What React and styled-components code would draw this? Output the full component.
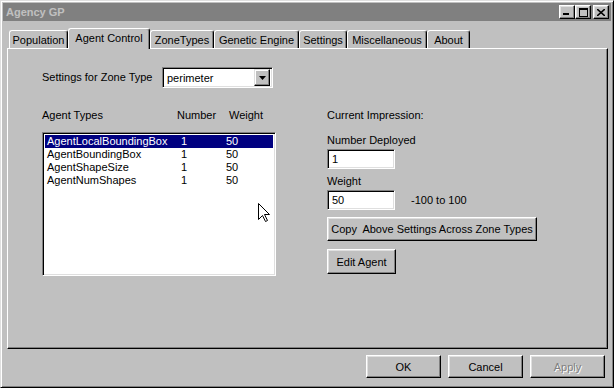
import React from 'react';
import styled, { createGlobalStyle } from 'styled-components';

const GlobalStyle = createGlobalStyle`
  html, body {
    margin: 0;
    padding: 0;
    background: #c0c0c0;
  }
  body {
    font-family: "Liberation Sans", Arial, sans-serif;
    font-size: 11px;
    color: #000;
  }
  * {
    box-sizing: border-box;
  }
`;

const Window = styled.div`
  width: 614px;
  height: 388px;
  display: flex;
  flex-direction: column;
  background: #c0c0c0;
  border: 1px solid;
  border-color: #dfdfdf #000 #000 #dfdfdf;
  box-shadow: inset 1px 1px #fff, inset -1px -1px #808080;
  padding: 2px;
`;

const TitleBar = styled.div`
  height: 18px;
  background: #808080;
  color: #c0c0c0;
  font-weight: bold;
  font-size: 11px;
  display: flex;
  align-items: center;
  justify-content: space-between;
  padding: 0 2px 0 3px;
`;

const TitleButtons = styled.div`
  display: flex;
  gap: 0;
`;

const TitleButton = styled.div`
  width: 16px;
  height: 14px;
  margin-left: ${({ $gap }) => ($gap ? '2px' : '0')};
  background: #c0c0c0;
  border: 1px solid;
  border-color: #fff #000 #000 #fff;
  box-shadow: inset -1px -1px #808080, inset 1px 1px #dfdfdf;
  display: flex;
  align-items: center;
  justify-content: center;
`;

const Body = styled.div`
  flex: 1;
  display: flex;
  flex-direction: column;
  padding: 7px 3px 5px 4px;
`;

const TabStrip = styled.div`
  display: flex;
  align-items: flex-end;
  height: 20px;
  padding-left: 2px;
  position: relative;
  z-index: 1;
`;

const Tab = styled.div`
  width: ${({ $w }) => $w}px;
  height: ${({ $active }) => ($active ? '21px' : '18px')};
  margin-bottom: ${({ $active }) => ($active ? '-1px' : '0')};
  background: #c0c0c0;
  border-top: 1px solid #fff;
  border-left: 1px solid #fff;
  border-right: 1px solid #000;
  border-radius: 3px 3px 0 0;
  box-shadow: inset -1px 0 #808080;
  display: flex;
  align-items: ${({ $active }) => ($active ? 'flex-start' : 'center')};
  padding-top: ${({ $active }) => ($active ? '3px' : '0')};
  justify-content: center;
  white-space: nowrap;
`;

const Panel = styled.div`
  height: 301px;
  border: 1px solid;
  border-color: #fff #000 #000 #fff;
  box-shadow: inset -1px -1px #808080;
  padding: 18px 0 0 34px;
  display: flex;
  flex-direction: column;
`;

const Row = styled.div`
  display: flex;
  align-items: center;
`;

const Label = styled.div`
  width: ${({ $w }) => ($w ? `${$w}px` : 'auto')};
  line-height: 13px;
  white-space: nowrap;
`;

const Sunken = styled.div`
  background: #fff;
  border: 1px solid;
  border-color: #808080 #fff #fff #808080;
  box-shadow: inset 1px 1px #000, inset -1px -1px #dfdfdf;
`;

const Combo = styled(Sunken)`
  width: 111px;
  height: 21px;
  display: flex;
  align-items: center;
  justify-content: space-between;
  padding: 2px 2px 2px 4px;
`;

const ComboArrow = styled.div`
  width: 16px;
  height: 17px;
  background: #c0c0c0;
  border: 1px solid;
  border-color: #dfdfdf #000 #000 #dfdfdf;
  box-shadow: inset -1px -1px #808080, inset 1px 1px #fff;
  display: flex;
  align-items: center;
  justify-content: center;
`;

const Columns = styled.div`
  display: flex;
  margin-top: 21px;
`;

const LeftColumn = styled.div`
  width: 234px;
  display: flex;
  flex-direction: column;
`;

const RightColumn = styled.div`
  margin-left: 51px;
  display: flex;
  flex-direction: column;
`;

const HeaderRow = styled.div`
  display: grid;
  grid-template-columns: 135px 52px auto;
  line-height: 13px;
`;

const ListBox = styled(Sunken)`
  margin-top: 10px;
  height: 144px;
  padding: 2px 2px 2px 2px;
  position: relative;
`;

const ListRow = styled.div`
  display: grid;
  grid-template-columns: 134px 45px auto;
  height: 13px;
  line-height: 13px;
  padding-left: 2px;
  background: ${({ $selected }) => ($selected ? '#000080' : 'transparent')};
  color: ${({ $selected }) => ($selected ? '#fff' : '#000')};
`;

const Cursor = styled.svg`
  position: absolute;
  left: 215px;
  top: 70px;
`;

const Field = styled(Sunken)`
  width: 68px;
  height: 20px;
  padding: 3px 4px;
  line-height: 13px;
`;

const Button = styled.div`
  width: ${({ $w }) => $w}px;
  height: ${({ $h }) => $h || 23}px;
  margin-top: ${({ $mt }) => $mt || 0}px;
  background: #c0c0c0;
  border: 1px solid;
  border-color: #fff #000 #000 #fff;
  box-shadow: inset -1px -1px #808080, inset 1px 1px #dfdfdf;
  display: flex;
  align-items: center;
  justify-content: center;
  white-space: nowrap;
  color: ${({ $disabled }) => ($disabled ? '#808080' : '#000')};
  text-shadow: ${({ $disabled }) => ($disabled ? '1px 1px #fff' : 'none')};
`;

const Footer = styled.div`
  display: flex;
  justify-content: flex-end;
  gap: 7px;
  margin-top: 6px;
  padding-right: 3px;
`;

const tabs = [
  ['Population', 59],
  ['Agent Control', 82],
  ['ZoneTypes', 64],
  ['Genetic Engine', 85],
  ['Settings', 48],
  ['Miscellaneous', 80],
  ['About', 43],
];

const agents = [
  ['AgentLocalBoundingBox', '1', '50'],
  ['AgentBoundingBox', '1', '50'],
  ['AgentShapeSize', '1', '50'],
  ['AgentNumShapes', '1', '50'],
];

function App() {
  return (
    <>
      <GlobalStyle />
      <Window>
        <TitleBar>
          <span>Agency GP</span>
          <TitleButtons>
            <TitleButton>
              <svg width="8" height="8" viewBox="0 0 8 8">
                <rect x="0" y="5" width="6" height="2" fill="#000" />
              </svg>
            </TitleButton>
            <TitleButton>
              <svg width="9" height="9" viewBox="0 0 9 9">
                <rect x="0.5" y="0.5" width="8" height="8" fill="none" stroke="#000" />
                <rect x="0" y="0" width="9" height="2" fill="#000" />
              </svg>
            </TitleButton>
            <TitleButton $gap>
              <svg width="8" height="7" viewBox="0 0 8 7">
                <path d="M0 0 L8 7 M8 0 L0 7" stroke="#000" strokeWidth="1.6" />
              </svg>
            </TitleButton>
          </TitleButtons>
        </TitleBar>
        <Body>
          <TabStrip>
            {tabs.map(([name, w]) => (
              <Tab key={name} $w={w} $active={name === 'Agent Control'}>
                {name}
              </Tab>
            ))}
          </TabStrip>
          <Panel>
            <Row>
              <Label $w={120}>Settings for Zone Type</Label>
              <Combo>
                <span>perimeter</span>
                <ComboArrow>
                  <svg width="7" height="4" viewBox="0 0 7 4">
                    <path d="M0 0 H7 L3.5 4 Z" fill="#000" />
                  </svg>
                </ComboArrow>
              </Combo>
            </Row>
            <Columns>
              <LeftColumn>
                <HeaderRow>
                  <span>Agent Types</span>
                  <span>Number</span>
                  <span>Weight</span>
                </HeaderRow>
                <ListBox>
                  {agents.map(([name, num, weight], i) => (
                    <ListRow key={name} $selected={i === 0}>
                      <span>{name}</span>
                      <span>{num}</span>
                      <span>{weight}</span>
                    </ListRow>
                  ))}
                  <Cursor width="13" height="20" viewBox="0 0 13 20">
                    <path
                      d="M0.5 0.5 L0.5 16.5 L4.5 12.5 L7.5 18.5 L9.5 17.5 L6.5 11.5 L11.5 11.5 Z"
                      fill="#fff"
                      stroke="#000"
                      strokeWidth="1"
                    />
                  </Cursor>
                </ListBox>
              </LeftColumn>
              <RightColumn>
                <Label>Current Impression:</Label>
                <Label style={{ marginTop: 12 }}>Number Deployed</Label>
                <Field style={{ marginTop: 2 }}>1</Field>
                <Label style={{ marginTop: 6 }}>Weight</Label>
                <Row style={{ marginTop: 2 }}>
                  <Field>50</Field>
                  <Label style={{ marginLeft: 16 }}>-100 to 100</Label>
                </Row>
                <Button $w={210} $h={24} $mt={7}>
                  Copy&nbsp; Above Settings Across Zone Types
                </Button>
                <Button $w={69} $h={25} $mt={8}>
                  Edit Agent
                </Button>
              </RightColumn>
            </Columns>
          </Panel>
          <Footer>
            <Button $w={75}>OK</Button>
            <Button $w={75}>Cancel</Button>
            <Button $w={75} $disabled>
              Apply
            </Button>
          </Footer>
        </Body>
      </Window>
    </>
  );
}

export default App;
